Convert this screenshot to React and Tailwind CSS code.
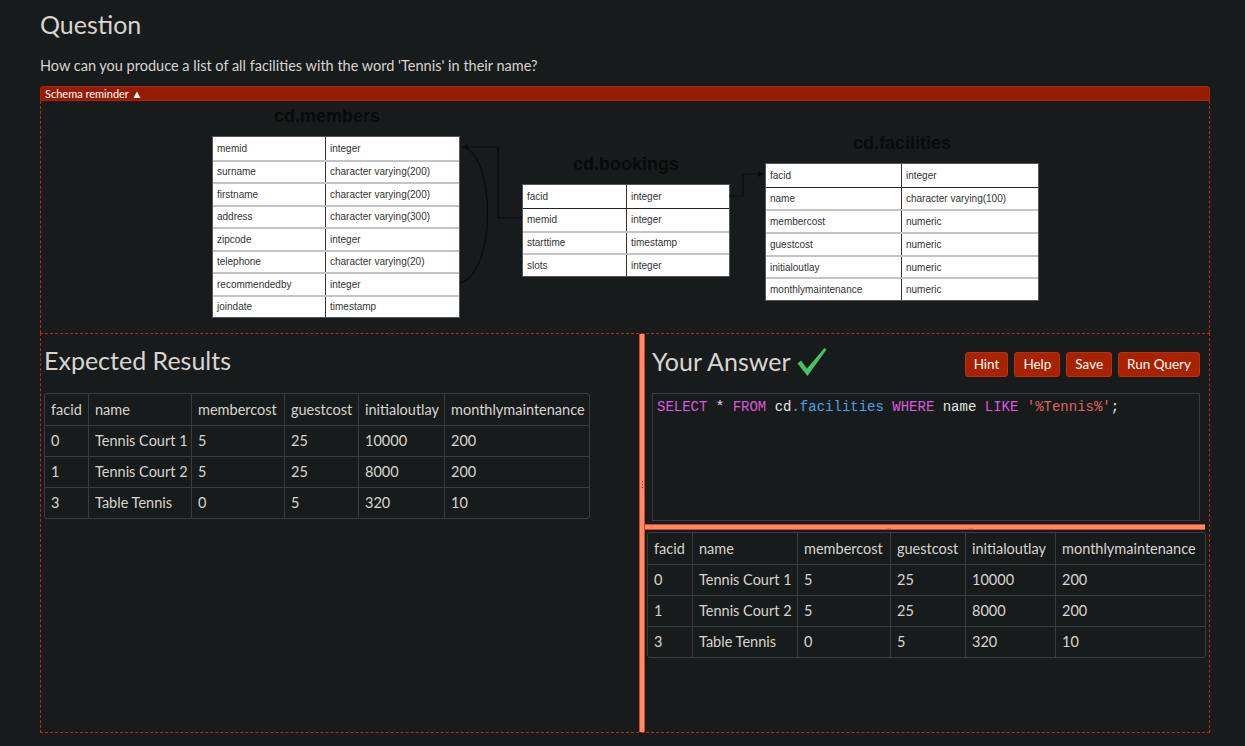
import React from "react";

const rows = [
  ["0", "Tennis Court 1", "5", "25", "10000", "200"],
  ["1", "Tennis Court 2", "5", "25", "8000", "200"],
  ["3", "Table Tennis", "0", "5", "320", "10"],
];
const cols = ["facid", "name", "membercost", "guestcost", "initialoutlay", "monthlymaintenance"];

const members = [
  ["memid", "integer"],
  ["surname", "character varying(200)"],
  ["firstname", "character varying(200)"],
  ["address", "character varying(300)"],
  ["zipcode", "integer"],
  ["telephone", "character varying(20)"],
  ["recommendedby", "integer"],
  ["joindate", "timestamp"],
];
const bookings = [
  ["facid", "integer"],
  ["memid", "integer"],
  ["starttime", "timestamp"],
  ["slots", "integer"],
];
const facilities = [
  ["facid", "integer"],
  ["name", "character varying(100)"],
  ["membercost", "numeric"],
  ["guestcost", "numeric"],
  ["initialoutlay", "numeric"],
  ["monthlymaintenance", "numeric"],
];

function SchemaTable({ fields, split, rowH, darkFirst }) {
  return (
    <div className="bg-white border border-[#555] w-full">
      {fields.map((f, i) => (
        <div
          key={i}
          className={`flex items-center text-[10px] text-[#333] ${i > 0 ? (darkFirst && i === 1 ? "border-t border-[#222]" : "border-t-2 border-[#c4c4c4]") : ""}`}
          style={{ height: rowH }}
        >
          <div className="h-full flex items-center pl-[4px] border-r border-[#333]" style={{ width: split }}>{f[0]}</div>
          <div className="pl-[4px]">{f[1]}</div>
        </div>
      ))}
    </div>
  );
}

function ResultTable({ widths, width }) {
  return (
    <table
      className="table-fixed border-separate border-spacing-0 border border-[#3a3d3e] rounded-[3px] text-[14.5px] text-[#d8d4cf]"
      style={{ width }}
    >
      <colgroup>
        {widths.map((w, i) => (
          <col key={i} style={{ width: w }} />
        ))}
      </colgroup>
      <thead>
        <tr className="h-[31px]">
          {cols.map((c, i) => (
            <th key={c} className={`font-normal text-left px-[6px] whitespace-nowrap ${i > 0 ? "border-l border-[#3a3d3e]" : ""}`}>{c}</th>
          ))}
        </tr>
      </thead>
      <tbody>
        {rows.map((r, ri) => (
          <tr key={ri} className="h-[31px]">
            {r.map((v, i) => (
              <td key={i} className={`px-[6px] whitespace-nowrap border-t border-[#3a3d3e] ${i > 0 ? "border-l" : ""}`}>{v}</td>
            ))}
          </tr>
        ))}
      </tbody>
    </table>
  );
}

export default function App() {
  const buttons = ["Hint", "Help", "Save", "Run Query"];

  return (
    <div className="min-h-screen bg-[#181b1c] text-[#d8d4cf] font-['Lato','Open_Sans',sans-serif]">
      <div className="pl-[40px] pr-[35px] pt-[10px] pb-[13px]">
        <h1 className="text-[25px] leading-[29px]">Question</h1>
        <p className="mt-[17px] text-[14.5px] leading-[20px]">How can you produce a list of all facilities with the word 'Tennis' in their name?</p>

        {/* Schema reminder */}
        <div className="mt-[10px] h-[15px] bg-[#951b02] rounded-t-[3px] border border-[#a3260c] text-white text-[11px] leading-[13px] pl-[4px]">
          Schema reminder ▲
        </div>
        <div className="h-[232px] border-x border-dashed border-[#c8250f]">
          <div className="relative w-full h-full font-['Liberation_Sans',Arial,sans-serif]">
            <div className="absolute left-[171px] top-[4px] w-[248px]">
              <div className="text-center font-bold text-[18px] leading-[22px] text-[#0a0a0a] mb-[9px] pr-[18px]">cd.members</div>
              <SchemaTable fields={members} split={113} rowH={22.5} />
            </div>
            <div className="absolute left-[481px] top-[52px] w-[208px]">
              <div className="text-center font-bold text-[18px] leading-[22px] text-[#0a0a0a] mb-[9px]">cd.bookings</div>
              <SchemaTable fields={bookings} split={104} rowH={22.75} darkFirst />
            </div>
            <div className="absolute left-[724px] top-[31px] w-[274px]">
              <div className="text-center font-bold text-[18px] leading-[22px] text-[#0a0a0a] mb-[9px]">cd.facilities</div>
              <SchemaTable fields={facilities} split={136} rowH={22.7} darkFirst />
            </div>
            <svg className="absolute inset-0 w-full h-full pointer-events-none" fill="none">
              <path d="M419 182 C 455 172, 455 58, 423 46" stroke="#0a0a0a" strokeWidth="1.2" />
              <path d="M481 117 H457 V46 H425" stroke="#0a0a0a" strokeWidth="1.2" />
              <path d="M421 46 L427 43 L427 49 Z" fill="#0a0a0a" />
              <path d="M688 95 H702 V73 H718" stroke="#0a0a0a" strokeWidth="1.2" />
              <path d="M723 73 L717 70 L717 76 Z" fill="#0a0a0a" />
            </svg>
          </div>
        </div>

        {/* Lower area */}
        <div className="h-[400px] border border-dashed border-[#c8250f] flex">
          <div className="w-[598px] pl-[3px] pt-[12px]">
            <h2 className="text-[25px] leading-[29px]">Expected Results</h2>
            <div className="mt-[18px]">
              <ResultTable width={546} widths={[43, 103, 93, 74, 86, 145]} />
            </div>
          </div>

          <div className="w-[6px] h-full bg-[#ff8a66] border-x border-[#d2462b] flex justify-center pt-[147px]">
            <div className="flex flex-col gap-[2px]">
              <span className="w-[1px] h-[1px] bg-[#b33]" />
              <span className="w-[1px] h-[1px] bg-[#b33]" />
              <span className="w-[1px] h-[1px] bg-[#b33]" />
            </div>
          </div>

          <div className="flex-1 pt-[12px]">
            <div className="flex items-center justify-between pl-[7px] pr-[9px]">
              <div className="flex items-center gap-[6px]">
                <h2 className="text-[25px] leading-[29px]">Your Answer</h2>
                <svg width="30" height="30" viewBox="0 0 30 30">
                  <path d="M0.5 16.5 L4 13.5 L10 21.5 L27.5 1 L29.5 2.5 L10.5 29 Z" fill="#46c265" />
                </svg>
              </div>
              <div className="flex gap-[6px] mt-[6px]">
                {buttons.map((b) => (
                  <button key={b} className="h-[25px] px-[8px] bg-[#a82100] border border-[#b8300f] rounded-[3px] text-white text-[13.5px]">
                    {b}
                  </button>
                ))}
              </div>
            </div>

            <div className="mt-[16px] ml-[7px] mr-[9px] h-[128px] border border-[#3a3d3e] px-[4px] pt-[4px] font-['Liberation_Mono','Courier_New',monospace] text-[14px] leading-[18px] whitespace-pre">
              <span className="text-[#dd57dd]">SELECT</span>
              <span className="text-[#e2e2e2]"> * </span>
              <span className="text-[#dd57dd]">FROM</span>
              <span className="text-[#e2e2e2]"> cd</span>
              <span className="text-[#4aa2e6]">.facilities</span>
              <span> </span>
              <span className="text-[#dd57dd]">WHERE</span>
              <span className="text-[#e2e2e2]"> name </span>
              <span className="text-[#dd57dd]">LIKE</span>
              <span> </span>
              <span className="text-[#e06258]">'%Tennis%'</span>
              <span className="text-[#e2e2e2]">;</span>
            </div>

            <div className="mt-[3px] mr-[4px] h-[6px] bg-[#ff8a66] border-y border-[#d2462b] relative">
              <span className="absolute left-[242px] top-[1px] text-[6px] leading-[2px] text-[#b33]">...</span>
              <span className="absolute left-[324px] top-[1px] text-[6px] leading-[2px] text-[#b33]">...</span>
            </div>

            <div className="mt-[2px] ml-[2px]">
              <ResultTable width={559} widths={[44, 105, 93, 75, 90, 150]} />
            </div>
          </div>
        </div>
      </div>
    </div>
  );
}
